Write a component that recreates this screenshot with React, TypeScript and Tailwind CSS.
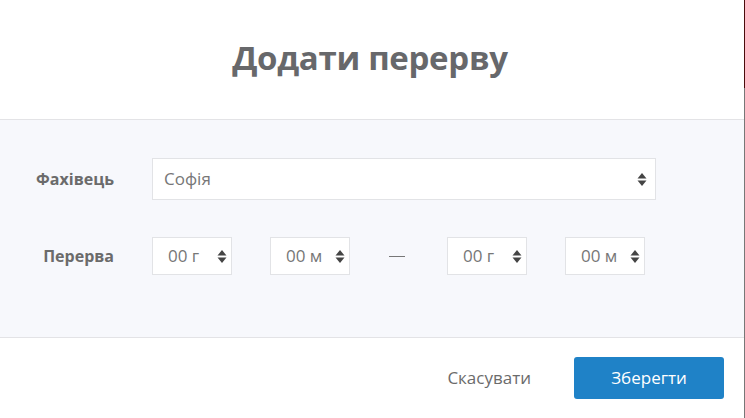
const Arrows = () => (
  <svg width="10" height="15" viewBox="0 0 10 15" className="shrink-0">
    <path d="M5 1 L9.5 6.5 H0.5 Z" fill="#444" />
    <path d="M5 14 L9.5 8.5 H0.5 Z" fill="#444" />
  </svg>
);

const TimeBox = ({ value }: { value: string }) => (
  <div className="flex h-[38px] w-[80px] items-center justify-between border border-[#e2e3e6] bg-white pl-[15px] pr-[4px]">
    <span className="text-[17px] text-[#777]">{value}</span>
    <Arrows />
  </div>
);

export default function App() {
  return (
    <div className="flex h-[418px] w-[745px] font-['Open_Sans',sans-serif]">
      <div className="flex h-full w-[744px] flex-col bg-white">
        {/* header */}
        <div className="flex h-[120px] items-center justify-center border-b border-[#e3e3e6] pr-[4px] pb-[3px]">
          <h1 className="text-[33px] font-bold tracking-[-0.3px] text-[#67686b]">Додати перерву</h1>
        </div>

        {/* body */}
        <div className="flex h-[217px] flex-col bg-[#f7f8fc] pt-[38px]">
          <div className="flex items-center">
            <div className="w-[114px] text-right text-[16px] font-bold text-[#6b6b6b]">Фахівець</div>
            <div className="ml-[38px] flex h-[42px] w-[504px] items-center justify-between border border-[#e2e3e6] bg-white pl-[11px] pr-[8px]">
              <span className="text-[17px] text-[#777]">Софія</span>
              <Arrows />
            </div>
          </div>
          <div className="mt-[37px] flex items-center">
            <div className="w-[114px] text-right text-[16px] font-bold text-[#6b6b6b]">Перерва</div>
            <div className="ml-[38px] flex items-center">
              <TimeBox value="00 г" />
              <div className="ml-[38px]">
                <TimeBox value="00 м" />
              </div>
              <div className="ml-[39px] h-px w-[16px] bg-[#777]" />
              <div className="ml-[42px]">
                <TimeBox value="00 г" />
              </div>
              <div className="ml-[38px]">
                <TimeBox value="00 м" />
              </div>
            </div>
          </div>
        </div>

        {/* footer */}
        <div className="flex flex-1 items-center justify-end border-t border-[#e3e3e6] pr-[20px]">
          <button className="mr-[43px] text-[17px] text-[#6b6b6b]">Скасувати</button>
          <button className="h-[42px] w-[150px] rounded-[3px] bg-[#1f82c7] text-[17px] text-white">Зберегти</button>
        </div>
      </div>
      <div className="flex w-px flex-col">
        <div className="h-[88px] bg-[#4a0c0c]" />
        <div className="flex-1 bg-[#777]" />
      </div>
    </div>
  );
}
